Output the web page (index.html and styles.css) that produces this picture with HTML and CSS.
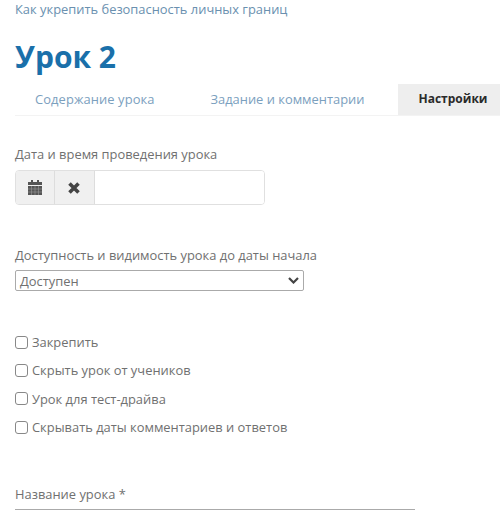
FILE: index.html
```html
<!DOCTYPE html>
<html>
<head>
    <title>Урок 2</title>
    <link rel="stylesheet" href="styles.css">
</head>
<body>
    <a class="crumb" href="#">Как укрепить безопасность личных границ</a>
    <h1>Урок 2</h1>
    <div class="tabs">
        <a class="tab tab--first" href="#">Содержание урока</a>
        <a class="tab tab--second" href="#">Задание и комментарии</a>
        <a class="tab tab--active" href="#">Настройки</a>
    </div>

    <div class="field field--date">
        <label class="field__label">Дата и время проведения урока</label>
        <div class="date">
            <span class="date__btn">
                <svg width="14" height="15" viewBox="0 0 14 15">
                    <path fill="#555" d="M3 0h2v2h4V0h2v2h3v3H0V2h3zM0 6h14v9H0z"/>
                    <path stroke="#999" stroke-width=".6" d="M0 9h14M0 12h14M3.500 6v9M7 6v9M10.500 6v9"/>
                </svg>
            </span>
            <span class="date__btn date__btn--clear">
                <svg width="12" height="12" viewBox="0 0 12 12">
                    <path stroke="#444" stroke-width="3.600" d="M1.500 1.500l9 9M10.500 1.500l-9 9"/>
                </svg>
            </span>
            <input class="date__input" type="text">
        </div>
    </div>

    <div class="field field--access">
        <label class="field__label">Доступность и видимость урока до даты начала</label>
        <div class="picker">
            <span>Доступен</span>
            <svg width="11" height="7" viewBox="0 0 11 7">
                <path fill="none" stroke="#444" stroke-width="2.200" d="M1 1l4.500 4.500L10 1"/>
            </svg>
        </div>
    </div>

    <div class="checks">
        <label class="check"><span class="check__box"></span>Закрепить</label>
        <label class="check"><span class="check__box"></span>Скрыть урок от учеников</label>
        <label class="check"><span class="check__box"></span>Урок для тест-драйва</label>
        <label class="check"><span class="check__box"></span>Скрывать даты комментариев и ответов</label>
    </div>

    <div class="title-field">Название урока *</div>
</body>
</html>
```

FILE: styles.css
```css
*, ::after, ::before {
    box-sizing: border-box;
}

html, body {
    height: 511px;
    overflow: hidden;
}

body {
    margin: 0;
    padding: 0 0 0 15px;
    color: #707070;
    background: #fff;
    font-size: 12.900px;
    font-family: "Open Sans", Arial, sans-serif;
}

a {
    text-decoration: none;
}

.crumb {
    display: block;
    margin-top: 1px;
    line-height: 16px;
    color: #6a90af;
}

h1 {
    margin: 20px 0 0;
    font-size: 30px;
    line-height: 40px;
    font-weight: 700;
    color: #1a70aa;
}

.tabs {
    display: flex;
    height: 32px;
    margin-top: 7px;
    border-bottom: 1px solid #f3f3f3;
}

.tab {
    line-height: 30px;
    color: #7ba0be;
}

.tab--first {
    margin-left: 20px;
    letter-spacing: .1px;
}

.tab--second {
    margin-left: 56px;
}

.tab--active {
    flex: 1;
    margin-left: 34px;
    padding-left: 20px;
    background: #eee;
    color: #2a2a2a;
    font-size: 12px;
    font-weight: 700;
}

.field--date {
    margin-top: 29px;
}

.field__label {
    display: block;
    line-height: 18px;
}

.date {
    display: flex;
    width: 250px;
    height: 35px;
    margin-top: 7px;
    border: 1px solid #e0e0e0;
    border-radius: 4px;
    overflow: hidden;
}

.date__btn {
    display: flex;
    width: 39px;
    align-items: center;
    justify-content: center;
    background: #f0f0f0;
    border-right: 1px solid #ddd;
}

.date__btn--clear {
    width: 40px;
    padding-right: 2px;
}

.date__input {
    flex: 1;
    min-width: 0;
    border: none;
    outline: none;
}

.field--access {
    margin-top: 41px;
}

.picker {
    display: flex;
    width: 289px;
    height: 21px;
    margin-top: 6px;
    padding: 0 4px;
    align-items: center;
    justify-content: space-between;
    border: 1px solid #aaa;
    border-radius: 2px;
}

.checks {
    display: flex;
    flex-direction: column;
    gap: 10.400px;
    margin-top: 42px;
}

.check {
    display: flex;
    height: 18px;
    align-items: center;
}

.check__box {
    width: 13px;
    height: 13px;
    margin-right: 4px;
    border: 1px solid #888;
    border-radius: 3px;
}

.title-field {
    width: 400px;
    height: 25px;
    margin-top: 49px;
    line-height: 18px;
    border-bottom: 1px solid #aaa;
}
```
